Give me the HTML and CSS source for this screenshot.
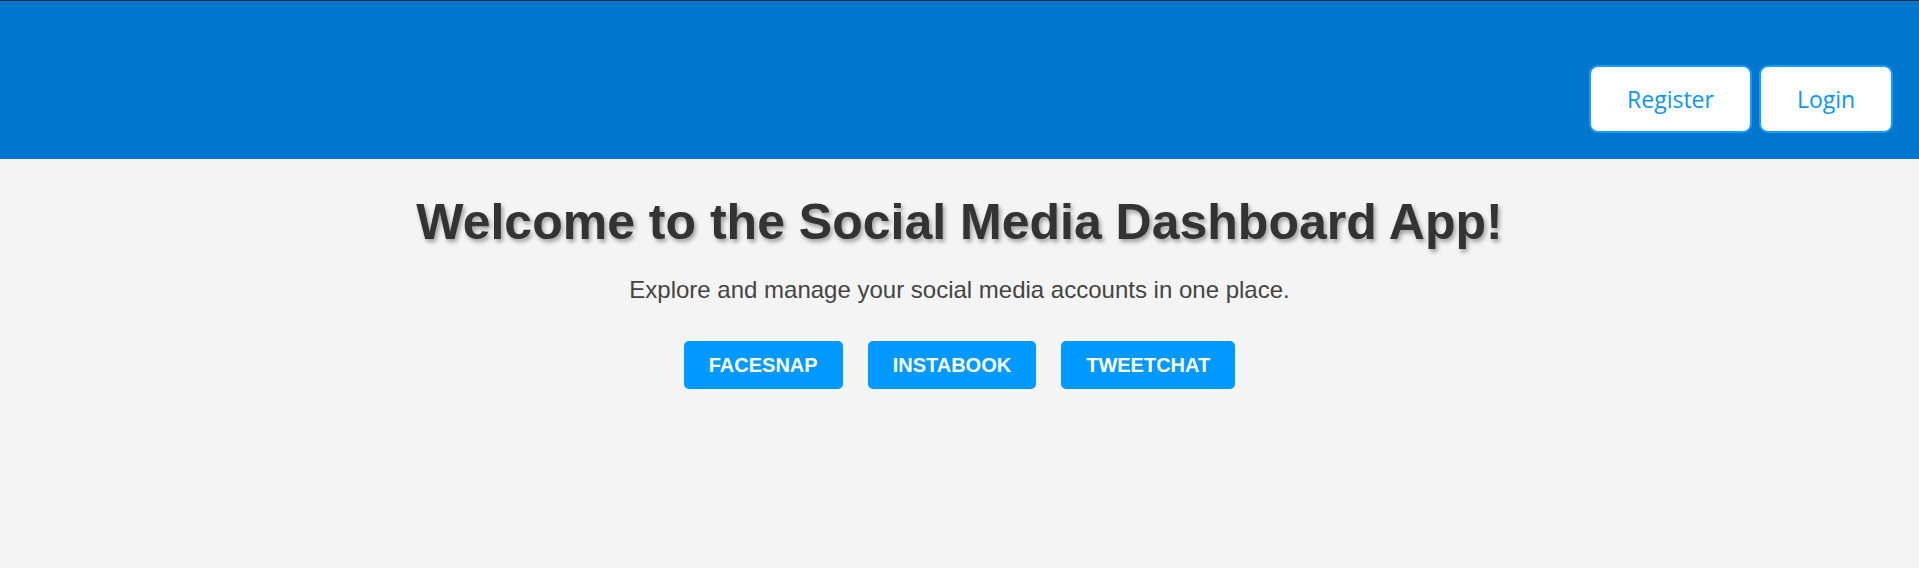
FILE: index.html
```html
<!DOCTYPE html>
<html lang="en">
<head>
<meta charset="utf-8">
<title>Social Media Dashboard</title>
<link rel="stylesheet" href="styles.css">
</head>
<body>
<header class="topbar">
  <nav class="auth">
    <a class="auth-btn register" href="#">Register</a>
    <a class="auth-btn login" href="#">Login</a>
  </nav>
</header>
<main class="hero">
  <h1 class="title">Welcome to the Social Media Dashboard App!</h1>
  <p class="subtitle">Explore and manage your social media accounts in one place.</p>
  <div class="platforms">
    <a class="platform" href="#">FACESNAP</a>
    <a class="platform" href="#">INSTABOOK</a>
    <a class="platform" href="#">TWEETCHAT</a>
  </div>
</main>
</body>
</html>
```
FILE: styles.css
```css
html, body {
  margin: 0;
  padding: 0;
}
body {
  background: #f4f4f4;
  font-family: "Liberation Sans", Arial, sans-serif;
  color: #333;
}
.topbar {
  height: 159px;
  background: #0077cc;
  border-top: 1px solid #1a2a3a;
  display: flex;
  justify-content: flex-end;
  align-items: flex-start;
  padding: 64px 26px 0 0;
  box-sizing: border-box;
}
.auth {
  display: flex;
  gap: 7px;
}
.auth-btn {
  display: flex;
  align-items: center;
  justify-content: center;
  height: 68px;
  box-sizing: border-box;
  background: #fff;
  border: 2px solid #1a9bff;
  border-radius: 9px;
  color: #0a96f5;
  text-decoration: none;
  font-family: "Open Sans", "Noto Sans", sans-serif;
  font-size: 23px;
}
.register { width: 163px; }
.login { width: 134px; }
.hero {
  display: flex;
  flex-direction: column;
  align-items: center;
}
.title {
  margin: 34px 0 0;
  font-size: 50px;
  font-weight: bold;
  color: #333;
  text-shadow: 2px 3px 4px rgba(0, 0, 0, 0.35);
}
.subtitle {
  margin: 25px 0 0;
  font-size: 24px;
  color: #444;
}
.platforms {
  display: flex;
  gap: 25px;
  margin-top: 37px;
}
.platform {
  display: flex;
  align-items: center;
  justify-content: center;
  height: 48px;
  padding: 0 25px;
  background: #0099ff;
  border-radius: 5px;
  color: #fff;
  font-weight: bold;
  font-size: 20px;
  text-decoration: none;
}
```
